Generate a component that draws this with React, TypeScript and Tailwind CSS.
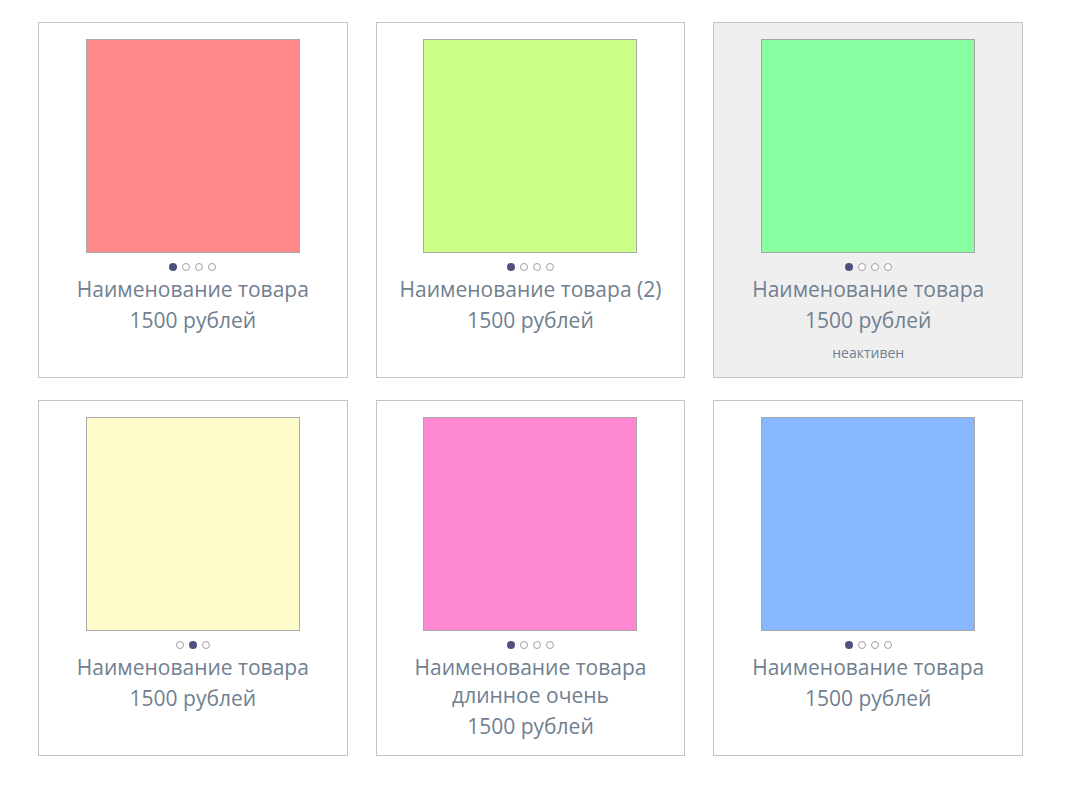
import React from 'react'

type Product = {
    color: string
    title: string
    dots: number
    active: number
    inactive?: boolean
}

const products: Product[] = [
    { color: 'bg-[#ff8888]', title: 'Наименование товара', dots: 4, active: 0 },
    { color: 'bg-[#ccff88]', title: 'Наименование товара (2)', dots: 4, active: 0 },
    { color: 'bg-[#88ffa0]', title: 'Наименование товара', dots: 4, active: 0, inactive: true },
    { color: 'bg-[#fffccc]', title: 'Наименование товара', dots: 3, active: 1 },
    { color: 'bg-[#ff88d2]', title: 'Наименование товара длинное очень', dots: 4, active: 0 },
    { color: 'bg-[#88b8ff]', title: 'Наименование товара', dots: 4, active: 0 },
]

function ProductCard({ p }: { p: Product }) {
    return (
        <div
            className={`h-[356px] border border-[#c4c4c4] flex flex-col items-center pt-4 ${
                p.inactive ? 'bg-[#efefef]' : 'bg-white'
            }`}
        >
            {/* Picture */}
            <div className={`w-[214px] h-[214px] border border-[#a8a8a8] ${p.color}`} />

            {/* Slider dots */}
            <div className="flex gap-[5px] mt-[10px]">
                {Array.from({ length: p.dots }).map((_, i) => (
                    <span
                        key={i}
                        className={
                            i === p.active
                                ? 'w-2 h-2 rounded-full bg-[#4f4f80]'
                                : 'w-2 h-2 rounded-full border border-[#a0a0a0] bg-white'
                        }
                    />
                ))}
            </div>

            <div className="mt-1 px-2 text-center text-[21px] leading-[28px] text-[#708090]">
                {p.title}
            </div>
            <div className="mt-[3px] text-center text-[21px] leading-[28px] text-[#708090]">1500 рублей</div>
            {p.inactive && (
                <div className="mt-[9px] text-[14px] leading-5 text-[#708090]">неактивен</div>
            )}
        </div>
    )
}

export default function App() {
    return (
        <div className="min-h-screen bg-white pt-[22px] pl-[38px] font-['Open_Sans',sans-serif]">
            <div className="w-[985px] grid grid-cols-3 gap-x-[28px] gap-y-[22px]">
                {products.map((p, i) => (
                    <ProductCard key={i} p={p} />
                ))}
            </div>
        </div>
    )
}
